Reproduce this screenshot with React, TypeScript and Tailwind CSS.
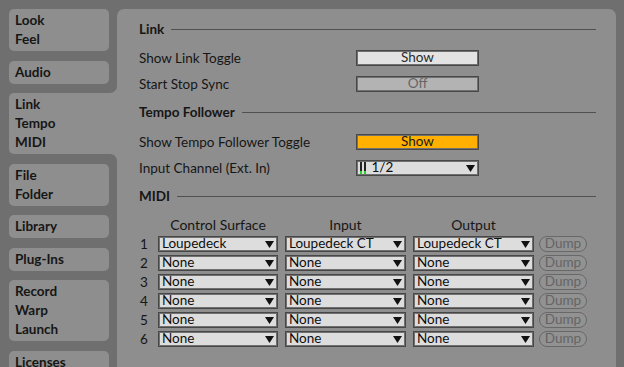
import React from "react";

const FONT = { fontFamily: "Lato, 'Liberation Sans', sans-serif" };

function Tri() {
  return (
    <svg width="9" height="7" viewBox="0 0 9 7" className="shrink-0">
      <polygon points="0,0 9,0 4.5,7" fill="#111" />
    </svg>
  );
}

function Dropdown({ value, w, meter }: { value: string; w: string; meter?: boolean }) {
  return (
    <div
      className={`${w} h-[16px] flex items-center bg-[#dddddd] border border-[#474747] shadow-[inset_0_0_0_1px_#707070] pl-[3px] pr-[3px] shrink-0`}
    >
      {meter && (
        <span className="flex gap-[1.5px] mr-[6px] items-end h-[12px]">
          <span className="w-[2px] h-[12px] flex flex-col">
            <span className="flex-1 bg-[#222]" />
            <span className="h-[3px] bg-[#2fd12f]" />
          </span>
          <span className="w-[2px] h-[12px] flex flex-col">
            <span className="flex-1 bg-[#222]" />
            <span className="h-[3px] bg-[#2fd12f]" />
          </span>
        </span>
      )}
      <span className="flex-1 text-[13.5px] leading-none text-[#0e0e0e] whitespace-nowrap">{value}</span>
      <Tri />
    </div>
  );
}

function Button({ label, variant }: { label: string; variant: "on" | "off" | "orange" }) {
  const cls =
    variant === "on"
      ? "bg-[#e3e3e3] text-[#2b2b2b]"
      : variant === "off"
      ? "bg-[#b3b3b3] text-[#666666]"
      : "bg-[#ffb000] text-[#1a1a1a]";
  return (
    <div
      className={`w-[123px] h-[16px] flex items-center justify-center border border-[#474747] shadow-[inset_0_0_0_1px_#707070] text-[13.5px] leading-none ${cls}`}
    >
      {label}
    </div>
  );
}

function Header({ title }: { title: string }) {
  return (
    <div className="h-[20px] flex items-center gap-[7px]">
      <span className="font-bold text-[13.5px] text-[#161616]">{title}</span>
      <div className="flex-1 h-px bg-[#505050]" />
    </div>
  );
}

function Row({ label, children }: { label: string; children: React.ReactNode }) {
  return (
    <div className="h-[26px] flex items-center">
      <span className="w-[217px] text-[13.5px] text-[#161616]">{label}</span>
      {children}
    </div>
  );
}

function Tab({ lines, selected }: { lines: string[]; selected?: boolean }) {
  if (selected) {
    return (
      <div className="relative w-[108px] rounded-l-[5px] bg-[#8e8e8e] pl-[6px] py-[2px]">
        {lines.map((l) => (
          <div key={l} className="text-[13.5px] font-bold leading-[19px] text-[#161616]">
            {l}
          </div>
        ))}
        <span className="absolute right-0 -top-[7px] w-[7px] h-[7px] bg-[#8e8e8e]">
          <span className="block w-full h-full bg-[#6f6f6f] rounded-br-[7px]" />
        </span>
        <span className="absolute right-0 -bottom-[7px] w-[7px] h-[7px] bg-[#8e8e8e]">
          <span className="block w-full h-full bg-[#6f6f6f] rounded-tr-[7px]" />
        </span>
      </div>
    );
  }
  return (
    <div className="w-[100px] rounded-[5px] bg-[#8e8e8e] pl-[6px] py-[2px]">
      {lines.map((l) => (
        <div key={l} className="text-[13.5px] font-bold leading-[19px] text-[#161616]">
          {l}
        </div>
      ))}
    </div>
  );
}

const midiRows = [
  { cs: "Loupedeck", inp: "Loupedeck CT", out: "Loupedeck CT" },
  { cs: "None", inp: "None", out: "None" },
  { cs: "None", inp: "None", out: "None" },
  { cs: "None", inp: "None", out: "None" },
  { cs: "None", inp: "None", out: "None" },
  { cs: "None", inp: "None", out: "None" },
];

export default function App() {
  return (
    <div
      className="w-[624px] h-[367px] overflow-hidden bg-[#6f6f6f] flex pt-[9px] pl-[9px] pr-[8px]"
      style={FONT}
    >
      <div className="w-[108px] shrink-0 flex flex-col gap-[9.5px]">
        <Tab lines={["Look", "Feel"]} />
        <Tab lines={["Audio"]} />
        <Tab lines={["Link", "Tempo", "MIDI"]} selected />
        <Tab lines={["File", "Folder"]} />
        <Tab lines={["Library"]} />
        <Tab lines={["Plug-Ins"]} />
        <Tab lines={["Record", "Warp", "Launch"]} />
        <Tab lines={["Licenses"]} />
      </div>
      <div className="flex-1 h-[400px] bg-[#8e8e8e] rounded-t-[7px] pl-[22px] pr-[20px] pt-[10px] flex flex-col">
        <Header title="Link" />
        <div className="mt-[6px]">
          <Row label="Show Link Toggle">
            <Button label="Show" variant="on" />
          </Row>
          <Row label="Start Stop Sync">
            <Button label="Off" variant="off" />
          </Row>
        </div>
        <div className="mt-[5px]">
          <Header title="Tempo Follower" />
        </div>
        <div className="mt-[7px]">
          <Row label="Show Tempo Follower Toggle">
            <Button label="Show" variant="orange" />
          </Row>
          <Row label="Input Channel (Ext. In)">
            <Dropdown value="1/2" w="w-[123px]" meter />
          </Row>
        </div>
        <div className="mt-[5px]">
          <Header title="MIDI" />
        </div>
        <div className="mt-[8px] h-[20px] flex items-center text-[14px] text-[#161616]">
          <span className="w-[19px]" />
          <span className="w-[120px] text-center">Control Surface</span>
          <span className="w-[7px]" />
          <span className="w-[121px] text-center">Input</span>
          <span className="w-[7px]" />
          <span className="w-[121px] text-center">Output</span>
        </div>
        <div className="mt-[2px] flex flex-col gap-[3px]">
          {midiRows.map((r, i) => (
            <div key={i} className="h-[16px] flex items-center">
              <span className="w-[19px] text-[13.5px] text-[#161616] pl-[1px]">{i + 1}</span>
              <Dropdown value={r.cs} w="w-[120px]" />
              <span className="w-[7px]" />
              <Dropdown value={r.inp} w="w-[121px]" />
              <span className="w-[7px]" />
              <Dropdown value={r.out} w="w-[121px]" />
              <span className="w-[5px]" />
              <div className="w-[48px] h-[16px] rounded-full border border-[#686868] bg-[#929292] flex items-center justify-center text-[13.5px] leading-none text-[#646464]">
                Dump
              </div>
            </div>
          ))}
        </div>
      </div>
    </div>
  );
}
